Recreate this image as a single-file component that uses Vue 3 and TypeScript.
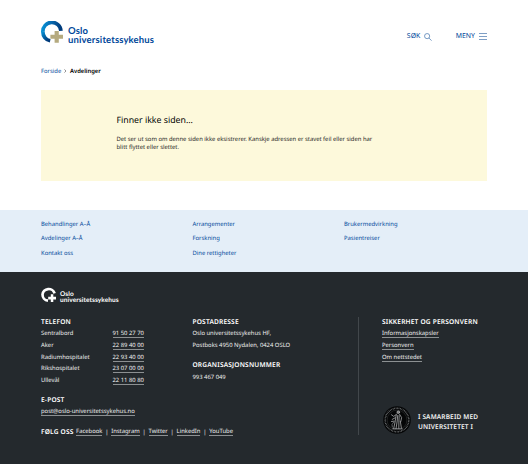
<script setup lang="ts">
interface Phone { name: string; number: string }

const quickLinks: string[][] = [
  ['Behandlinger A–Å', 'Avdelinger A–Å', 'Kontakt oss'],
  ['Arrangementer', 'Forskning', 'Dine rettigheter'],
  ['Brukermedvirkning', 'Pasientreiser'],
]
const phones: Phone[] = [
  { name: 'Sentralbord', number: '91 50 27 70' },
  { name: 'Aker', number: '22 89 40 00' },
  { name: 'Radiumhospitalet', number: '22 93 40 00' },
  { name: 'Rikshospitalet', number: '23 07 00 00' },
  { name: 'Ullevål', number: '22 11 80 80' },
]
const social: string[] = ['Facebook', 'Instagram', 'Twitter', 'LinkedIn', 'YouTube']
const policies: string[] = ['Informasjonskapsler', 'Personvern', 'Om nettstedet']
</script>

<template>
  <div class="page">
    <header class="top">
      <a class="logo">
        <svg class="mark" viewBox="0 0 22 24">
          <defs>
            <linearGradient id="ring" x1="0" y1="0.3" x2="1" y2="0.4">
              <stop offset="0" stop-color="#078fd3" />
              <stop offset="0.45" stop-color="#0868af" />
              <stop offset="1" stop-color="#003b7b" />
            </linearGradient>
            <linearGradient id="tail" x1="0" y1="0" x2="0.6" y2="1">
              <stop offset="0" stop-color="#078fd3" />
              <stop offset="1" stop-color="#003b7b" />
            </linearGradient>
          </defs>
          <path d="M1.9 10.9A9 9 0 0 1 19.9 9.8" fill="none" stroke="url(#ring)" stroke-width="3.7" />
          <path d="M1.9 10.6A9 9 0 0 0 9.2 19.8" fill="none" stroke="url(#tail)" stroke-width="3.7" />
          <path d="M13.6 10h4.2v3.8h4.2v4h-4.2v4h-4.2v-4h-4.2v-4h4.2z" fill="#b5aa7f" />
        </svg>
        <span class="wordmark">Oslo<br />universitetssykehus</span>
      </a>
      <nav class="actions">
        <a class="action search">SØK
          <svg class="glass" viewBox="0 0 9 9"><circle cx="3.5" cy="3.5" r="2.9" /><path d="M5.5 5.6 8.6 8.7" /></svg>
        </a>
        <a class="action">MENY <span class="burger"><i></i><i></i><i></i></span></a>
      </nav>
    </header>

    <nav class="crumbs">
      <a>Forside</a>
      <svg class="chevron" viewBox="0 0 3 5"><path d="M.5.5 2.4 2.5.5 4.5" /></svg>
      <b>Avdelinger</b>
    </nav>

    <main class="notice">
      <h1>Finner ikke siden...</h1>
      <p>Det ser ut som om denne siden ikke eksistrerer. Kanskje adressen er stavet feil eller siden har<br />blitt flyttet eller slettet.</p>
    </main>

    <nav class="quick">
      <ul v-for="(col, i) in quickLinks" :key="i">
        <li v-for="link in col" :key="link"><a>{{ link }}</a></li>
      </ul>
    </nav>

    <footer class="foot">
      <a class="logo small">
        <svg class="mark" viewBox="0 0 16 16">
          <path d="M1.5 7.6A6.2 6.2 0 0 1 13.6 6.4M1.5 7.4A6.2 6.2 0 0 0 7 13.7" fill="none" stroke="#fff" stroke-width="2.7" />
          <path d="M9.8 7.2h2.5v2.6h2.7v2.6h-2.7V15H9.8v-2.6H7.2V9.8h2.6z" fill="#fff" />
        </svg>
        <span class="wordmark">Oslo<br />universitetssykehus</span>
      </a>
      <div class="columns">
        <div class="main">
          <div class="pair">
            <section class="contact">
              <h2>TELEFON</h2>
              <dl>
                <div v-for="p in phones" :key="p.name"><dt>{{ p.name }}</dt><dd><a>{{ p.number }}</a></dd></div>
              </dl>
              <h2 class="next">E-POST</h2>
              <p class="mail"><a>post@oslo-universitetssykehus.no</a></p>
            </section>
            <section>
              <h2>POSTADRESSE</h2>
              <p>Oslo universitetssykehus HF,</p>
              <p>Postboks 4950 Nydalen, 0424 OSLO</p>
              <h2 class="org">ORGANISASJONSNUMMER</h2>
              <p>993 467 049</p>
            </section>
          </div>
          <div class="social">
            <h2>FØLG OSS</h2>
            <template v-for="(s, i) in social" :key="s">
              <span v-if="i" class="bar">|</span><a>{{ s }}</a>
            </template>
          </div>
        </div>
        <aside>
          <h2>SIKKERHET OG PERSONVERN</h2>
          <p v-for="p in policies" :key="p"><a>{{ p }}</a></p>
          <div class="partner">
            <svg class="seal" viewBox="0 0 28 28">
              <circle cx="14" cy="14" r="13.8" fill="#050607" />
              <circle cx="14" cy="14" r="11.8" fill="none" stroke="#85888a" stroke-width="1.5" stroke-dasharray="0.6 0.9" />
              <circle cx="14" cy="14" r="9.9" fill="none" stroke="#505355" stroke-width=".35" />
              <g fill="none" stroke="#a9abac" stroke-width=".8" stroke-linecap="round">
                <circle cx="15.3" cy="6.2" r="1.3" fill="#777" />
                <path d="M13.5 8.3 10.7 10.4 8.5 8.8M16.5 8.2 18.6 11.6 17.8 15.5M13.2 9 12.4 14.4 10.7 22.5M14.7 9.5 14.2 15 13 22.7M16.2 9.6 15.9 15 15.8 22.4M17.3 15.2 18.4 22M9.2 13.4 12.3 11.7M8.5 15.5 11.3 15.1M9.7 22.8H19.2" />
                <path d="M10.8 16 9 18.5 9.3 21" stroke="#777a7c" />
              </g>
            </svg>
            <strong>I SAMARBEID MED<br />UNIVERSITETET I</strong>
          </div>
        </aside>
      </div>
    </footer>
  </div>
</template>

<style>
body { margin: 0; background: #fff; }
</style>

<style scoped>
.page { width: 528px; height: 464px; overflow: hidden; display: flex; flex-direction: column; font-family: "Noto Sans", "Open Sans", sans-serif; font-size: 5.87px; color: #1c1c1c; text-rendering: geometricPrecision; }
h1, h2, p, ul, dl, dd { margin: 0; padding: 0; }
ul { list-style: none; }
.top { height: 62px; padding: 0 41px; display: flex; justify-content: space-between; box-sizing: border-box; }
.logo { display: flex; color: #00479a; }
.mark { width: 22px; height: 24px; margin-top: 21px; flex: none; }
.wordmark { font: 700 9.5px/9px Lato, sans-serif; letter-spacing: .15px; margin: 27px 0 0 5px; white-space: nowrap; }
.actions { display: flex; gap: 23.5px; margin-top: 30.5px; height: 12px; color: #00479a; }
.action { display: flex; align-items: center; gap: 4px; font-size: 6.9px; line-height: 12px; }
.glass { width: 8px; height: 8px; fill: none; stroke: #4375ad; stroke-width: .8; }
.burger { width: 8px; height: 7px; display: flex; flex-direction: column; justify-content: space-between; }
.burger i { height: 1px; background: #7f9fc5; }
.crumbs { height: 28px; padding-left: 41px; display: flex; align-items: flex-start; line-height: 18px; }
.crumbs a, .quick a { color: #00479a; }
.crumbs b { font-weight: 600; color: #000; letter-spacing: -.03px; }
.chevron { width: 2.5px; height: 4px; margin: 7px 3.2px 0; fill: none; stroke: #555; stroke-width: .8; }
.notice { height: 91px; margin: 0 41px; padding: 23.5px 0 0 75.5px; background: #fdf9db; box-sizing: border-box; }
.notice h1 { font-size: 8.75px; line-height: 13px; font-weight: 400; color: #000; }
.notice p { margin-top: 8px; line-height: 8.8px; white-space: nowrap; }
.quick { height: 62px; margin-top: 29px; padding: 6.5px 0 0 41px; background: #e4eef8; box-sizing: border-box; display: grid; grid-template-columns: 151.5px 151.5px 1fr; line-height: 14.7px; }
.foot { flex: 1; padding-left: 41px; background: #24292d; color: #f2f2f2; }
.small { height: 45px; color: #fff; }
.small .mark { width: 16px; height: 16px; margin-top: 15px; }
.small .wordmark { font-size: 6.5px; line-height: 6px; letter-spacing: .09px; margin: 19.5px 0 0 3px; }
.columns { display: flex; }
.main { width: 316.5px; height: 118px; border-right: 1px solid #42474b; }
.pair { display: flex; height: 106px; line-height: 11.7px; }
.contact { width: 151.5px; }
h2 { font-size: 6.6px; line-height: 10px; font-weight: 600; letter-spacing: .18px; color: #fff; white-space: nowrap; margin-bottom: 1.4px; }
dl div { display: flex; height: 11.7px; }
dt { width: 71.5px; }
.foot p { height: 11.7px; line-height: 11.7px; white-space: nowrap; }
.foot dd a, .foot p a, .social a { display: inline-block; line-height: 8px; border-bottom: 1px solid #8c9092; }
.next { margin-top: 8.2px; }
.org { margin-top: 8.4px; }
.social { display: flex; align-items: center; height: 17px; white-space: nowrap; }
.social h2 { margin: 0 2.5px 0 0; }
.bar { margin: 0 2.8px; }
aside { padding-left: 23.5px; }
.partner { display: flex; align-items: center; margin: 42.4px 0 0 1px; gap: 7px; }
.seal { width: 28px; height: 28px; }
.partner strong { font-size: 6.5px; line-height: 10.2px; font-weight: 600; letter-spacing: .15px; margin-top: 5px; white-space: nowrap; }
</style>
